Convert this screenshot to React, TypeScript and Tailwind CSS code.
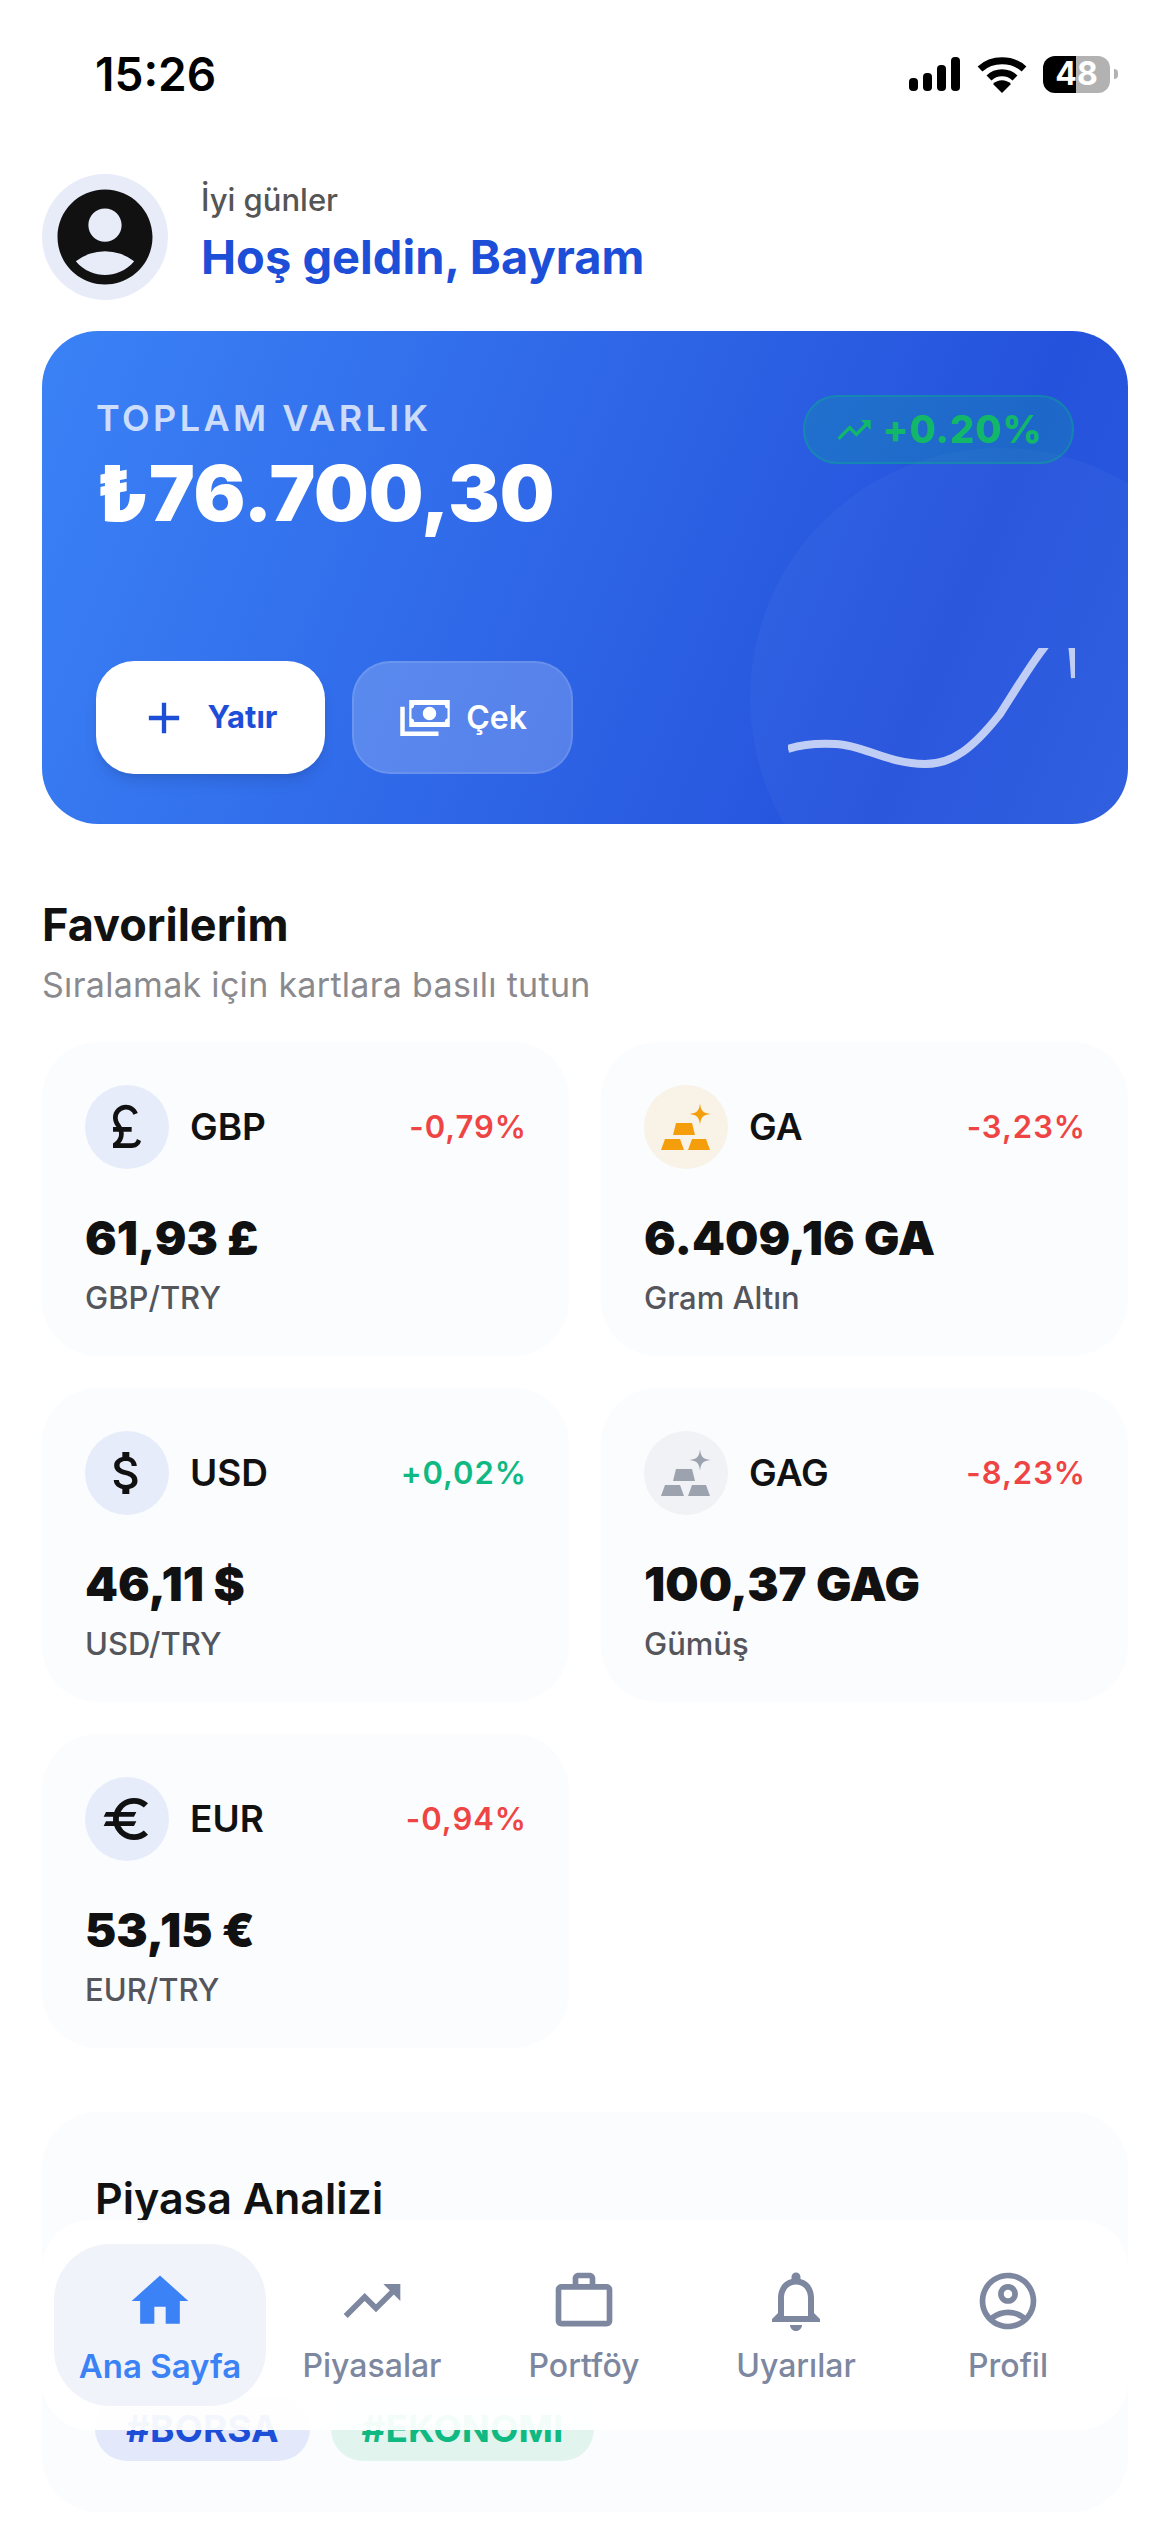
import React from 'react';
import {
  MdAccountCircle,
  MdAdd,
  MdAttachMoney,
  MdCurrencyPound,
  MdEuro,
  MdHome,
  MdNotificationsNone,
  MdOutlineAccountCircle,
  MdTrendingUp,
  MdWorkOutline,
} from 'react-icons/md';

interface Favorite {
  code: string;
  change: string;
  up: boolean;
  value: string;
  sub: string;
  iconBg: string;
  icon: React.ReactNode;
}

const BarsIcon = ({ color }: { color: string }) => (
  <svg width="84" height="84" viewBox="0 0 84 84">
    <path d="M32 38h16l3 12H29z" fill={color} />
    <path d="M21 54h15l4 11H17z" fill={color} />
    <path d="M48 54h14l4 11H44z" fill={color} />
    <path d="M56 18.5c1 7.500 3 9.500 10.500 10.500-7.500 1-9.500 3-10.500 10.500-1-7.500-3-9.500-10.500-10.500 7.500-1 9.500-3 10.500-10.500z" fill={color} />
  </svg>
);

const favorites: Favorite[] = [
  { code: 'GBP', change: '-0,79%', up: false, value: '61,93 £', sub: 'GBP/TRY', iconBg: 'bg-[#e6ecfa]', icon: <MdCurrencyPound size={56} color="#111111" /> },
  { code: 'GA', change: '-3,23%', up: false, value: '6.409,16 GA', sub: 'Gram Altın', iconBg: 'bg-[#f8f2e7]', icon: <BarsIcon color="#f59e0b" /> },
  { code: 'USD', change: '+0,02%', up: true, value: '46,11 $', sub: 'USD/TRY', iconBg: 'bg-[#e6ecfa]', icon: <MdAttachMoney size={56} color="#111111" /> },
  { code: 'GAG', change: '-8,23%', up: false, value: '100,37 GAG', sub: 'Gümüş', iconBg: 'bg-[#f0f2f6]', icon: <BarsIcon color="#9ca3af" /> },
  { code: 'EUR', change: '-0,94%', up: false, value: '53,15 €', sub: 'EUR/TRY', iconBg: 'bg-[#e6ecfa]', icon: <MdEuro size={56} color="#111111" /> },
];

const tabs = [
  { label: 'Piyasalar', icon: <MdTrendingUp size={68} /> },
  { label: 'Portföy', icon: <MdWorkOutline size={68} /> },
  { label: 'Uyarılar', icon: <MdNotificationsNone size={72} className="-mt-[2px] -mb-[2px]" /> },
  { label: 'Profil', icon: <MdOutlineAccountCircle size={68} /> },
];

const StatusBar = () => (
  <div className="flex h-[174px] items-start justify-between pl-[95px] pr-[52px] pt-[49px]">
    <span className="text-[46px] leading-[50px] font-semibold text-black">15:26</span>
    <div className="flex items-center pt-[6px]">
      <svg width="51" height="36" viewBox="0 0 51 36" fill="black">
        <rect x="0" y="22" width="9" height="13" rx="4" />
        <rect x="14" y="17" width="9" height="18" rx="4" />
        <rect x="28" y="9" width="9" height="26" rx="4" />
        <rect x="42" y="1" width="9" height="34" rx="4" />
      </svg>
      <svg className="ml-[17px]" width="50" height="38" viewBox="0 0 50 38" fill="none" stroke="black" strokeWidth="7">
        <path d="M3 14C15 3 35 3 47 14" />
        <path d="M12 23C19 16 31 16 38 23" />
        <path d="M16 29L25 38L34 29C29 24 21 24 16 29Z" fill="black" stroke="none" />
      </svg>
      <div className="relative ml-[16px] flex h-[37px] w-[67px] overflow-hidden rounded-[12px]">
        <div className="w-[33px] bg-black" />
        <div className="flex-1 bg-[#b2b2b2]" />
        <span className="absolute inset-0 flex items-center justify-center text-[32px] font-bold text-white">48</span>
      </div>
      <div className="ml-[4px] h-[10px] w-[4px] rounded-r-full bg-[#b2b2b2]" />
    </div>
  </div>
);

const BalanceCard = () => (
  <div className="relative mx-[42px] h-[493px] overflow-hidden rounded-[56px] bg-[linear-gradient(112deg,#3b82f6,#2552dc_80%,#2a5bdf)]">
    <div className="absolute -bottom-[124px] -right-[122px] h-[500px] w-[500px] rounded-full bg-white/[0.03]" />
    <div className="relative flex h-full flex-col px-[54px] pb-[50px] pt-[66px]">
      <div className="flex items-start justify-between">
        <div>
          <div className="text-[36px] leading-[42px] font-semibold tracking-[3.400px] text-white/75">TOPLAM VARLIK</div>
          <div className="mt-[12px] text-[77px] leading-[84px] font-black text-white">₺76.700,30</div>
        </div>
        <div className="-mt-[2px] flex h-[69px] w-[271px] items-center justify-center gap-[8px] rounded-[34px] border-2 border-emerald-500/30 bg-emerald-500/20">
          <MdTrendingUp size={40} color="#12b76a" />
          <span className="text-[38px] font-extrabold tracking-[1px] text-[#12b76a]">+0.20%</span>
        </div>
      </div>
      <div className="mt-auto flex gap-[27px]">
        <div className="flex h-[113px] w-[229px] items-center justify-center gap-[18px] rounded-[38px] bg-white pr-[6px] shadow-lg">
          <MdAdd size={52} color="#1d4ed8" />
          <span className="text-[31px] font-bold text-[#1d4ed8]">Yatır</span>
        </div>
        <div className="flex h-[113px] w-[221px] items-center justify-center gap-[14px] rounded-[38px] border-2 border-white/10 bg-white/20">
          <svg width="54" height="54" viewBox="0 0 24 24" fill="white">
            <path d="M5 4h18v12H5zM7.200 6.200c0 .9-.5 1.500-1.200 1.600v4.400c.7.100 1.200.7 1.200 1.600h13.600c0-.9.500-1.500 1.200-1.600V7.800c-.7-.1-1.200-.7-1.200-1.600zM14 7a3 3 0 1 1 0 6 3 3 0 0 1 0-6zM1 7h2v11h15v2H1z" fillRule="evenodd" />
          </svg>
          <span className="text-[32px] font-semibold text-white">Çek</span>
        </div>
      </div>
    </div>
    <svg className="absolute left-[746px] top-[317px]" width="287" height="130" viewBox="0 0 287 130" fill="none">
      <path d="M0 101C15 96 30 95 48 96C75 97 100 116 137 116C165 116 185 100 212 66C235 30 250 5 268 -15C272 -30 282 -50 287 30" stroke="white" strokeOpacity="0.7" strokeWidth="8" />
    </svg>
  </div>
);

const FavoriteCard = ({ item }: { item: Favorite }) => (
  <div className="flex h-[314px] flex-col rounded-[56px] bg-[#fafcfe] pl-[43px] pr-[42px] pt-[43px]">
    <div className="flex items-center">
      <div className={`flex h-[84px] w-[84px] items-center justify-center rounded-full ${item.iconBg}`}>{item.icon}</div>
      <span className="ml-[21px] text-[37px] font-semibold text-[#111111]">{item.code}</span>
      <span className={`ml-auto text-[31px] font-semibold tracking-[1px] ${item.up ? 'text-[#10b981]' : 'text-[#ef4444]'}`}>{item.change}</span>
    </div>
    <div className="mt-[41px] text-[47px] leading-[56px] font-black text-[#111111]">{item.value}</div>
    <div className="mt-[13px] text-[31px] leading-[38px] font-medium text-[#55555c]">{item.sub}</div>
  </div>
);

const BottomNav = () => (
  <div className="absolute left-[42px] top-[2220px] flex h-[210px] w-[1086px] items-center rounded-[48px] bg-white/95 pl-[12px] pr-[12px] text-[#7d879f]">
    <div className="flex h-[162px] w-[212px] flex-col items-center rounded-[56px] bg-[#f1f3fa] pt-[23px] text-[#3b82f6]">
      <MdHome size={68} />
      <span className="mt-[7px] text-[33px] font-semibold">Ana Sayfa</span>
    </div>
    {tabs.map((tab) => (
      <div key={tab.label} className="flex h-[162px] w-[212px] flex-col items-center pt-[23px]">
        {tab.icon}
        <span className="mt-[7px] text-[32px] font-medium">{tab.label}</span>
      </div>
    ))}
  </div>
);

export default function App() {
  return (
    <div className="relative h-[2532px] w-[1170px] overflow-hidden bg-white [font-family:Inter,sans-serif]">
      <StatusBar />
      <div className="flex h-[157px] items-start px-[42px]">
        <div className="flex h-[126px] w-[126px] items-center justify-center rounded-full bg-[#e8ecf8]">
          <MdAccountCircle size={114} color="#111111" />
        </div>
        <div className="ml-[33px] pt-[5px]">
          <div className="text-[31px] leading-[42px] font-medium text-[#555555]">İyi günler</div>
          <div className="mt-[6px] text-[47px] leading-[60px] font-bold text-[#1d4ed8]">Hoş geldin, Bayram</div>
        </div>
      </div>
      <BalanceCard />
      <div className="px-[42px] pt-[73px]">
        <div className="text-[45px] leading-[56px] font-bold text-[#111111]">Favorilerim</div>
        <div className="mt-[12px] text-[34px] leading-[40px] tracking-[0.3px] text-[#8a8a8e]">Sıralamak için kartlara basılı tutun</div>
      </div>
      <div className="mt-[37px] grid grid-cols-2 gap-[32px] px-[42px]">
        {favorites.map((item) => (
          <FavoriteCard key={item.code} item={item} />
        ))}
      </div>
      <div className="mx-[42px] mt-[64px] flex h-[400px] flex-col rounded-[56px] bg-[#fafcfe] pb-[51px] pl-[53px] pr-[54px] pt-[58px]">
        <div className="text-[43px] leading-[56px] font-semibold text-[#111111]">Piyasa Analizi</div>
        <div className="mt-auto flex gap-[21px]">
          <span className="flex h-[64px] items-center rounded-[32px] bg-[#e3e9fa] px-[31px] text-[37px] font-bold text-[#1d4ed8]">#BORSA</span>
          <span className="flex h-[64px] items-center rounded-[32px] bg-[#e1f5ee] px-[31px] text-[37px] font-bold text-[#10b981]">#EKONOMI</span>
        </div>
      </div>
      <BottomNav />
    </div>
  );
}
